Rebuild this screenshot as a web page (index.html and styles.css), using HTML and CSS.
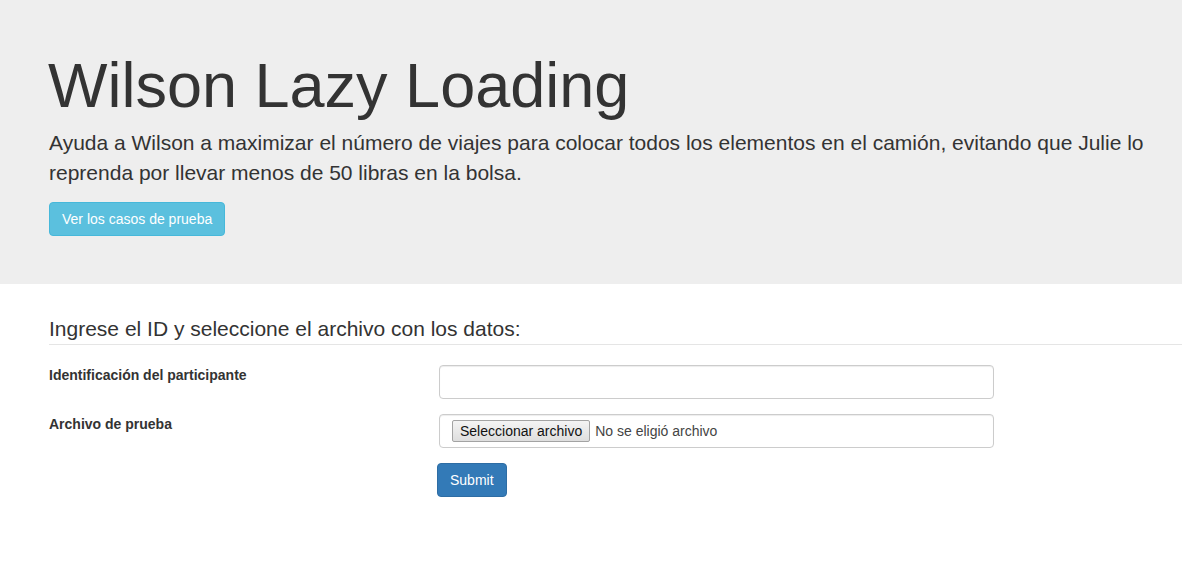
FILE: index.html
```html
<!DOCTYPE html>
<html lang="es">
<head>
<meta charset="utf-8">
<title>Wilson Lazy Loading</title>
<link rel="stylesheet" href="styles.css">
</head>
<body>
<header class="jumbotron">
  <h1 class="title">Wilson Lazy Loading</h1>
  <p class="lead">Ayuda a Wilson a maximizar el número de viajes para colocar todos los elementos en el camión, evitando que Julie lo reprenda por llevar menos de 50 libras en la bolsa.</p>
  <a class="btn btn-info" href="#">Ver los casos de prueba</a>
</header>
<main class="form-section">
  <form class="upload-form">
    <div class="legend">Ingrese el ID y seleccione el archivo con los datos:</div>
    <div class="form-row">
      <label class="form-label" for="pid">Identificación del participante</label>
      <input class="form-control" id="pid" type="text">
    </div>
    <div class="form-row">
      <label class="form-label">Archivo de prueba</label>
      <div class="form-control file-control">
        <span class="file-btn">Seleccionar archivo</span>
        <span class="file-name">No se eligió archivo</span>
      </div>
    </div>
    <div class="submit-row">
      <button class="btn btn-primary" type="button">Submit</button>
    </div>
  </form>
</main>
</body>
</html>
```

FILE: styles.css
```css
* { box-sizing: border-box; }
html, body {
  margin: 0;
  padding: 0;
  background: #fff;
  font-family: "Liberation Sans", Arial, Helvetica, sans-serif;
  font-size: 14px;
  line-height: 1.42857;
  color: #333;
}
.jumbotron {
  background: #eeeeee;
  padding: 51px 15px 48px 49px;
  margin: 0 0 30px 0;
}
.title {
  font-size: 63px;
  font-weight: 400;
  line-height: 1.1;
  margin: 0 0 8px -1px;
  color: #333;
}
.lead {
  font-size: 21px;
  line-height: 30px;
  font-weight: 400;
  margin: 0 0 14px 0;
}
.btn {
  display: inline-block;
  height: 34px;
  padding: 6px 12px;
  font-family: inherit;
  font-size: 14px;
  line-height: 20px;
  border: 1px solid transparent;
  border-radius: 4px;
  text-decoration: none;
  color: #fff;
  cursor: pointer;
}
.btn-info {
  background: #5bc0de;
  border-color: #46b8da;
}
.btn-primary {
  background: #337ab7;
  border-color: #2e6da4;
}
.form-section {
  padding: 0 0 0 49px;
}
.legend {
  font-size: 21px;
  line-height: 30px;
  color: #333;
  border-bottom: 1px solid #e5e5e5;
  margin-bottom: 20px;
}
.form-row {
  display: grid;
  grid-template-columns: 390px 555px;
  margin-bottom: 15px;
}
.form-label {
  font-weight: 700;
  font-size: 14px;
  line-height: 20px;
}
.form-control {
  display: block;
  width: 555px;
  height: 34px;
  padding: 6px 12px;
  font-family: inherit;
  font-size: 14px;
  line-height: 20px;
  color: #555;
  background: #fff;
  border: 1px solid #ccc;
  border-radius: 4px;
  box-shadow: inset 0 1px 1px rgba(0,0,0,.075);
}
.file-control {
  display: flex;
  align-items: center;
  padding: 0 12px;
  gap: 5px;
}
.file-btn {
  display: inline-block;
  height: 22px;
  padding: 0 7px;
  line-height: 20px;
  font-size: 14px;
  color: #111;
  background: linear-gradient(#f4f4f4, #dedede);
  border: 1px solid #a3a3a3;
  border-radius: 2px;
}
.file-name {
  color: #444;
}
.submit-row {
  padding-left: 388px;
}
```
